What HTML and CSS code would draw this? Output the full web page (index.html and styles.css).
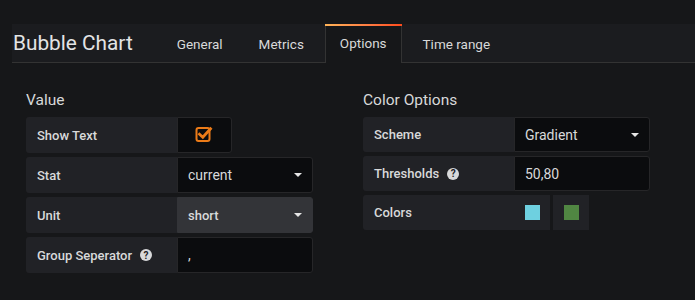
FILE: index.html
```html
<!DOCTYPE html>
<html>
<head>
<meta charset="utf-8">
<link rel="stylesheet" href="styles.css">
</head>
<body>
<div class="header">
  <div class="title">Bubble Chart</div>
  <ul class="tabs">
    <li class="tab">General</li>
    <li class="tab">Metrics</li>
    <li class="tab active">Options</li>
    <li class="tab">Time range</li>
  </ul>
</div>
<div class="content">
  <section class="section left">
    <h5 class="heading">Value</h5>
    <div class="rows">
      <div class="row">
        <div class="label">Show Text</div>
        <div class="input check">
          <svg width="18" height="18" viewBox="0 0 18 18">
            <rect x="1.5" y="3" width="13" height="13" rx="2" fill="none" stroke="#eb7b18" stroke-width="2"/>
            <path d="M4.5 9.2 L7.8 12.3 L15.5 3.8" fill="none" stroke="#eb7b18" stroke-width="2.8" stroke-linecap="square"/>
          </svg>
        </div>
      </div>
      <div class="row">
        <div class="label">Stat</div>
        <div class="input select"><span>current</span><i class="caret"></i></div>
      </div>
      <div class="row">
        <div class="label">Unit</div>
        <div class="input select unit"><span>short</span><i class="caret"></i></div>
      </div>
      <div class="row">
        <div class="label">Group Seperator <span class="help">?</span></div>
        <div class="input text"><span class="comma">,</span></div>
      </div>
    </div>
  </section>
  <section class="section right">
    <h5 class="heading">Color Options</h5>
    <div class="rows tight">
      <div class="row">
        <div class="label">Scheme</div>
        <div class="input select"><span>Gradient</span><i class="caret"></i></div>
      </div>
      <div class="row">
        <div class="label">Thresholds <span class="help">?</span></div>
        <div class="input text"><span>50,80</span></div>
      </div>
      <div class="row">
        <div class="label">Colors</div>
        <div class="swatches">
          <div class="swatch-box"><span class="swatch cyan"></span></div>
          <div class="swatch-box"><span class="swatch green"></span></div>
        </div>
      </div>
    </div>
  </section>
</div>
</body>
</html>
```
FILE: styles.css
```css
html, body {
  margin: 0;
  padding: 0;
  background: #161719;
  color: #d8d9da;
  font-family: Roboto, "Liberation Sans", sans-serif;
  height: 300px;
  overflow: hidden;
}
.header {
  margin: 24px 0 0 12px;
  height: 38px;
  background: #1b1c1f;
  border-bottom: 1px solid #333;
  display: flex;
  align-items: stretch;
}
.title {
  font-size: 20.8px;
  line-height: 38px;
  padding-left: 1px;
  margin-right: 29px;
  color: #e3e4e5;
}
.tabs {
  list-style: none;
  margin: 0;
  padding: 0;
  display: flex;
  gap: 6px;
  align-items: flex-end;
}
.tab {
  font-size: 13.5px;
  height: 37px;
  line-height: 38px;
  padding: 0 14px;
  border: 1px solid transparent;
  border-bottom: none;
  color: #d8d9da;
  position: relative;
}
.tab.active {
  background: #161719;
  border-color: #333;
  height: 38px;
  margin-bottom: -1px;
  line-height: 37px;
}
.tab.active::before {
  content: "";
  position: absolute;
  left: -1px;
  right: -1px;
  top: -1px;
  height: 2px;
  background: linear-gradient(90deg, #ffb357, #ff7941 60%, #ff4b1c);
}
.content {
  display: flex;
  padding: 0 0 0 26px;
  gap: 50px;
}
.section {
  width: 287px;
}
.heading {
  margin: 26px 0 0;
  font-size: 15.5px;
  font-weight: 400;
  line-height: 22px;
  height: 28px;
}
.rows {
  display: flex;
  flex-direction: column;
  gap: 4px;
}
.row {
  display: flex;
  height: 36px;
}
.tight .row {
  height: 35px;
}
.label {
  width: 151px;
  box-sizing: border-box;
  background: #212226;
  border-radius: 3px 0 0 3px;
  padding-left: 11px;
  font-size: 13px;
  font-weight: 500;
  display: flex;
  align-items: center;
  color: #d8d9da;
}
.help {
  display: inline-flex;
  align-items: center;
  justify-content: center;
  width: 12px;
  height: 12px;
  border-radius: 50%;
  background: #d8d9da;
  color: #1b1c1f;
  font-size: 10px;
  font-weight: 700;
  margin-left: 8px;
}
.input {
  box-sizing: border-box;
  background: #0b0c0e;
  border: 1px solid #262628;
  border-radius: 0 3px 3px 0;
  display: flex;
  align-items: center;
  font-size: 14px;
  color: #d8d9da;
}
.check {
  width: 55px;
  justify-content: center;
}
.check svg {
  margin-left: -1px;
  margin-top: -2px;
}
.select, .text {
  width: 136px;
  padding: 0 10px;
}
.select {
  justify-content: space-between;
}
.unit {
  background: #333438;
  border-color: #333438;
  font-weight: 500;
  font-size: 13px;
}
.caret {
  width: 0;
  height: 0;
  border-left: 4px solid transparent;
  border-right: 4px solid transparent;
  border-top: 4px solid #e6e6e6;
  margin-right: 0;
}
.comma {
  color: #d8d9da;
}
.swatches {
  display: flex;
  gap: 3px;
}
.swatch-box {
  width: 36px;
  background: #212226;
  display: flex;
  align-items: center;
  justify-content: center;
}
.swatch {
  width: 15px;
  height: 15px;
}
.cyan { background: #6ed0e0; }
.green { background: #508642; }
```
